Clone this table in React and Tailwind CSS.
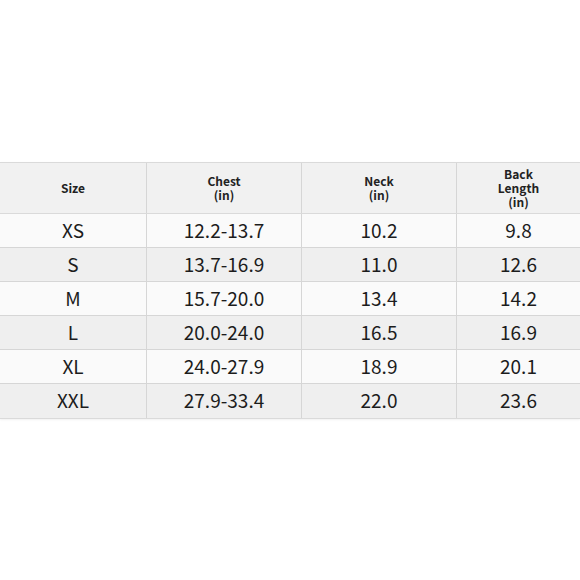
import React from 'react';

const rows = [
  ['XS', '12.2-13.7', '10.2', '9.8'],
  ['S', '13.7-16.9', '11.0', '12.6'],
  ['M', '15.7-20.0', '13.4', '14.2'],
  ['L', '20.0-24.0', '16.5', '16.9'],
  ['XL', '24.0-27.9', '18.9', '20.1'],
  ['XXL', '27.9-33.4', '22.0', '23.6'],
];

const cols = 'grid grid-cols-[147px_155px_155px_1fr]';

export default function App() {
  return (
    <div className="w-[580px] h-[580px] bg-white pt-[162px]" style={{ fontFamily: '"Noto Sans CJK SC", "Noto Sans", sans-serif' }}>
      <div className="border-t border-b border-[#dadada] shadow-[0_1px_2px_rgba(0,0,0,0.06)]">
        <div className={`${cols} h-[51px] bg-[#f1f1f1] border-b border-[#dadada] text-[12px] leading-[14px] font-bold text-[#222]`}>
          <div className="flex items-center justify-center border-r border-[#d6d6d6]">Size</div>
          <div className="flex flex-col items-center justify-center border-r border-[#d6d6d6]">
            <span>Chest</span>
            <span>(in)</span>
          </div>
          <div className="flex flex-col items-center justify-center border-r border-[#d6d6d6]">
            <span>Neck</span>
            <span>(in)</span>
          </div>
          <div className="flex flex-col items-center justify-center">
            <span>Back</span>
            <span>Length</span>
            <span>(in)</span>
          </div>
        </div>
        {rows.map((r, i) => (
          <div
            key={r[0]}
            className={`${cols} h-[34px] text-[19px] leading-[22px] text-[#1c1c1c] ${i % 2 === 0 ? 'bg-[#fafafa]' : 'bg-[#efefef]'} ${i < rows.length - 1 ? 'border-b border-[#d6d6d6]' : ''}`}
          >
            {r.map((c, j) => (
              <div key={j} className={`flex items-center justify-center pb-[2px] ${j < 3 ? 'border-r border-[#d6d6d6]' : ''}`}>
                {c}
              </div>
            ))}
          </div>
        ))}
      </div>
    </div>
  );
}
